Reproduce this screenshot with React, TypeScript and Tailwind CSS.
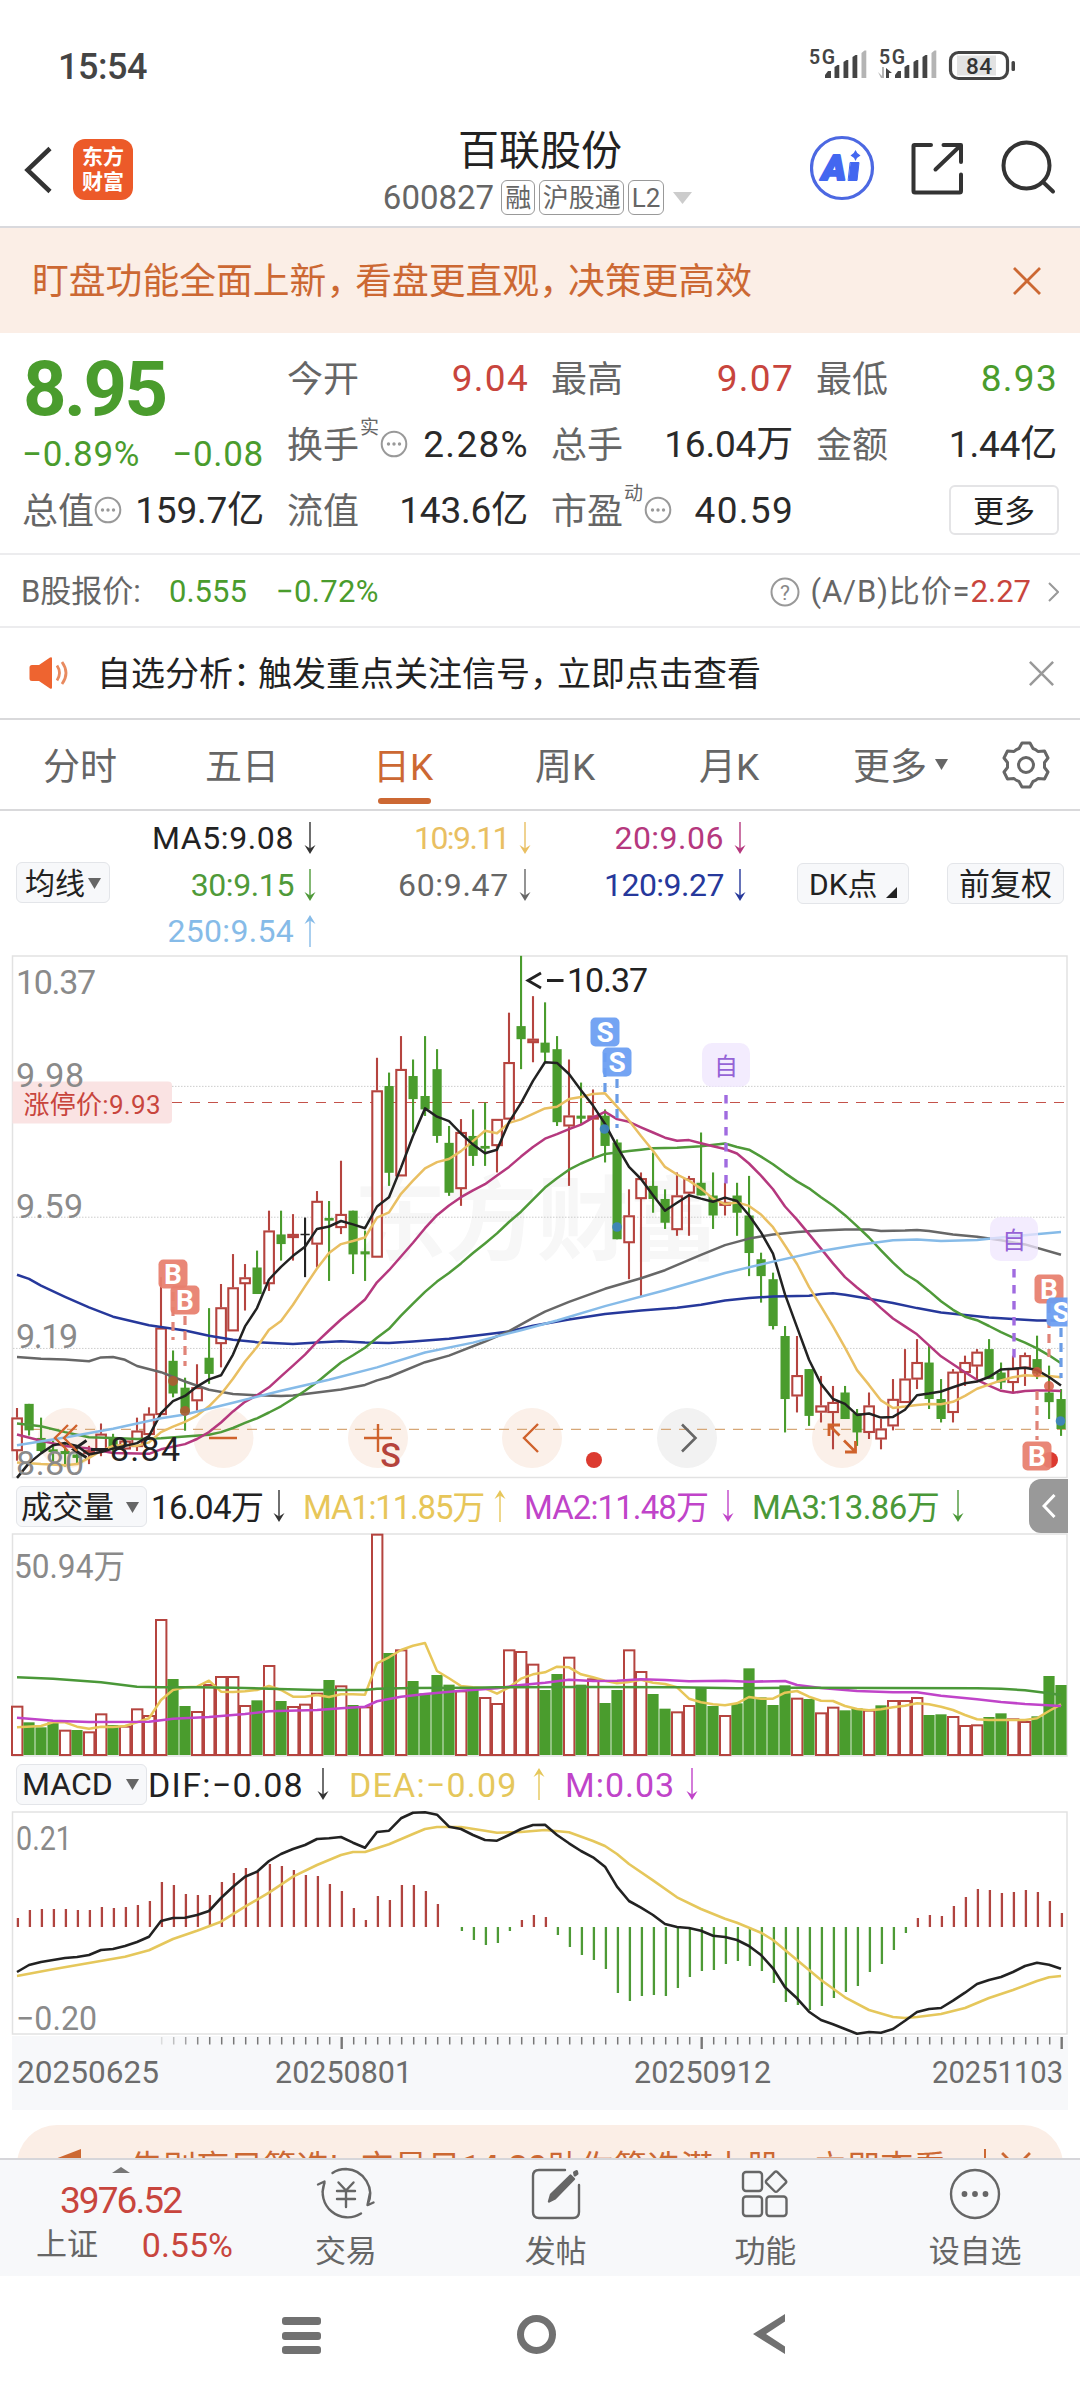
import React from "react";

const RED = "#b5443f";
const GREEN = "#4a9c2d";

type Pts = number[];

// kind, high, body top, body bottom, low — in chart units measured down from the plot origin
const candles: [string, number, number, number, number][] = [
  ["r", 1330, 1358, 1455, 1483], ["g", 1318, 1318, 1395, 1410], ["g", 1358, 1417, 1455, 1458], ["g", 1425, 1450, 1458, 1490],
  ["g", 1430, 1455, 1464, 1500], ["g", 1440, 1465, 1475, 1490], ["r", 1440, 1453, 1461, 1493], ["r", 1375, 1405, 1455, 1470],
  ["g", 1405, 1420, 1450, 1465], ["r", 1420, 1425, 1450, 1465], ["r", 1358, 1396, 1443, 1455], ["r", 1328, 1347, 1408, 1420],
  ["r", 950, 1097, 1350, 1350], ["g", 1163, 1193, 1288, 1299], ["g", 1242, 1271, 1345, 1396], ["r", 1203, 1270, 1310, 1338],
  ["g", 1040, 1184, 1231, 1260], ["r", 970, 1038, 1144, 1212], ["r", 883, 980, 1107, 1107], ["r", 912, 951, 970, 1047],
  ["g", 873, 922, 999, 999], ["r", 757, 815, 970, 990], ["g", 757, 826, 854, 902], ["r", 767, 825, 836, 902],
  ["k", 777, 824, 828, 950], ["r", 700, 729, 855, 922], ["g", 729, 778, 786, 961], ["r", 612, 767, 807, 825],
  ["g", 757, 757, 884, 941], ["g", 815, 875, 884, 961], ["r", 313, 408, 893, 893], ["g", 356, 395, 647, 685],
  ["r", 250, 346, 657, 657], ["g", 318, 366, 433, 530], ["g", 250, 424, 463, 482], ["g", 288, 346, 540, 560],
  ["g", 511, 560, 705, 714], ["r", 491, 529, 694, 743], ["g", 463, 540, 598, 627], ["g", 443, 569, 577, 627],
  ["r", 491, 491, 569, 646], ["r", 182, 326, 492, 492], ["g", 17, 221, 259, 346], ["r", 134, 258, 270, 326],
  ["g", 152, 269, 298, 325], ["g", 250, 288, 500, 511], ["r", 318, 481, 512, 685], ["g", 385, 481, 490, 505],
  ["r", 405, 481, 492, 603], ["g", 463, 481, 569, 617], ["g", 550, 559, 840, 840], ["r", 695, 771, 851, 956],
  ["r", 646, 663, 723, 1005], ["g", 588, 685, 723, 763], ["g", 695, 723, 792, 810], ["r", 646, 713, 813, 830],
  ["r", 656, 663, 707, 830], ["g", 530, 676, 713, 713], ["g", 646, 713, 771, 810], ["r", 676, 732, 740, 771],
  ["g", 676, 713, 763, 830], ["g", 656, 771, 880, 947], ["g", 879, 898, 947, 1024], ["g", 937, 956, 1092, 1102],
  ["g", 1092, 1121, 1304, 1401], ["r", 1121, 1235, 1296, 1343], ["g", 1217, 1217, 1353, 1382], ["r", 1237, 1323, 1343, 1372],
  ["r", 1266, 1313, 1344, 1450], ["g", 1266, 1285, 1362, 1362], ["g", 1333, 1345, 1401, 1440], ["r", 1285, 1323, 1402, 1420],
  ["r", 1362, 1390, 1421, 1450], ["r", 1246, 1304, 1383, 1395], ["r", 1159, 1245, 1315, 1315], ["r", 1130, 1197, 1247, 1275],
  ["g", 1150, 1198, 1304, 1333], ["g", 1246, 1304, 1362, 1372], ["r", 1217, 1225, 1344, 1372], ["r", 1178, 1197, 1228, 1266],
  ["r", 1159, 1167, 1209, 1246], ["g", 1130, 1159, 1246, 1246], ["g", 1198, 1227, 1256, 1275], ["r", 1178, 1215, 1257, 1285],
  ["r", 1169, 1177, 1215, 1266], ["g", 1120, 1188, 1230, 1246], ["g", 1207, 1285, 1313, 1362], ["g", 1275, 1304, 1391, 1411],
];

// moving averages: index, value pairs
const ma5: Pts = [0,1533,1,1490,2,1462,3,1438,4,1432,5,1440,6,1465,7,1458,8,1448,9,1440,10,1432,11,1412,12,1345,13,1310,14,1295,15,1268,16,1247,17,1235,18,1175,19,1093,20,1040,21,957,22,920,23,888,24,862,25,810,26,803,27,787,28,797,29,808,30,745,31,718,32,632,33,540,34,460,35,484,36,497,37,533,38,565,39,590,40,580,41,500,42,445,43,380,44,326,45,328,46,360,47,407,48,452,49,505,50,570,51,630,52,665,53,712,54,757,55,734,56,712,57,722,58,731,59,719,60,729,61,770,62,820,63,882,64,1000,65,1095,66,1190,67,1260,68,1304,69,1318,70,1350,71,1346,72,1358,73,1356,74,1335,75,1293,76,1288,77,1282,78,1270,79,1258,80,1253,81,1240,82,1218,83,1216,84,1213,85,1220,86,1240,87,1265];
const ma10: Pts = [0,1488,2,1493,4,1496,5,1493,6,1475,7,1455,8,1440,9,1437,10,1440,11,1430,12,1400,13,1384,14,1370,15,1352,16,1325,17,1290,18,1245,19,1195,20,1153,21,1103,22,1077,23,1030,24,977,25,925,26,880,27,854,28,845,29,835,30,777,31,762,32,708,33,670,34,634,35,616,36,607,37,584,38,555,39,525,40,532,41,502,42,492,43,476,44,460,45,455,46,433,47,427,48,418,49,416,50,455,51,495,52,540,53,583,54,630,55,652,56,670,57,693,58,722,59,738,60,733,61,743,62,768,63,805,64,858,65,912,66,978,67,1035,68,1093,69,1155,70,1220,71,1263,72,1308,73,1330,74,1326,75,1321,76,1318,77,1319,78,1312,79,1295,80,1274,81,1262,82,1250,83,1241,84,1235,85,1237,86,1237,87,1241];
const ma20: Pts = [0,1407,2,1425,4,1440,6,1448,8,1461,11,1463,12,1450,13,1442,14,1435,15,1420,16,1400,17,1372,18,1340,19,1312,20,1293,21,1270,22,1238,23,1207,24,1175,25,1138,26,1105,27,1073,28,1045,29,1015,30,965,31,930,32,890,33,850,34,808,35,770,36,742,37,718,38,698,39,680,40,655,41,630,42,600,43,572,44,548,45,535,46,520,47,507,48,487,49,470,50,491,51,499,52,515,53,530,54,545,55,554,56,552,57,561,58,570,59,578,60,591,61,620,62,655,63,695,64,745,65,783,66,825,67,867,68,910,69,950,70,980,71,1008,72,1040,73,1070,74,1093,75,1116,76,1148,77,1180,78,1203,79,1226,80,1248,81,1265,82,1280,83,1286,84,1281,85,1279,86,1279,87,1281];
const ma30: Pts = [0,1375,2,1383,4,1400,6,1415,8,1417,10,1420,12,1418,14,1413,16,1408,17,1400,18,1388,19,1373,20,1360,21,1343,22,1325,23,1303,24,1280,25,1255,26,1226,27,1198,28,1177,29,1155,30,1126,31,1100,32,1062,33,1027,34,993,35,963,36,938,37,910,38,880,39,852,40,823,41,790,42,760,43,725,44,690,45,663,46,638,47,620,48,605,49,592,50,588,51,584,52,580,53,576,55,574,57,570,59,562,60,572,61,580,62,600,63,622,64,648,65,672,66,692,67,718,68,742,69,770,70,802,71,835,72,872,73,908,74,940,75,962,76,990,77,1020,78,1045,79,1065,80,1075,81,1092,82,1110,83,1126,84,1140,85,1157,86,1177,87,1200];
const ma60: Pts = [0,1182,2,1187,4,1189,6,1194,7,1183,8,1182,9,1190,10,1208,12,1226,14,1253,16,1277,18,1289,20,1293,22,1295,23,1294,25,1285,27,1276,29,1263,30,1250,31,1240,34,1197,36,1178,39,1137,41,1107,43,1068,44,1050,46,1022,49,984,52,953,54,930,57,885,59,857,61,838,63,826,65,819,67,815,69,812,71,812,72,816,74,815,75,813,76,816,78,826,80,833,82,843,84,855,87,885];
const ma120: Pts = [0,943,1,955,2,975,4,1007,6,1038,8,1065,11,1090,14,1105,16,1120,18,1132,20,1139,23,1144,25,1140,27,1136,29,1140,31,1141,33,1137,36,1129,39,1117,41,1108,43,1091,46,1073,49,1057,52,1047,55,1039,57,1030,59,1018,61,1011,63,1006,66,1004,67,999,68,997,69,1001,71,1013,73,1025,75,1040,77,1053,79,1060,81,1067,83,1072,85,1076,87,1076];
const ma250: Pts = [0,1438,4,1416,8,1390,12,1360,14,1349,18,1315,22,1280,26,1248,30,1212,34,1169,38,1140,42,1104,45,1076,49,1034,54,988,59,938,63,905,67,874,70,857,73,843,75,841,77,845,80,842,83,831,87,819];

const volumes =
  "710r 760g 775g 760g 782r 783g 787r 733r 768g 770r 718r 738r 450r 630g 711g 726r 645r 621r 621r 708r 694g 588r 696g 711r 704r 671r 633g 649r 708g 712r 194r 552g 541r 636g 673g 618g 647g 664r 663g 684r 702r 541r 546r 584r 663g 615g 563r 647g 628r 702g 663g 541r 606r 675g 719g 727r 708r 655g 711g 738r 703g 598g 685g 708g 649g 686r 690g 730r 713r 724g 718g 722r 709g 693r 693r 684r 738g 736g 741r 768r 766r 744g 733g 748r 756r 742g 621g 648g".split(" ");
const vma1: Pts = [0,772,2,768,3,757,4,757,5,770,6,776,7,770,8,771,9,768,10,757,11,745,12,690,13,660,14,652,15,650,16,632,17,665,18,666,19,664,20,660,21,648,22,660,23,680,24,680,25,675,26,681,27,673,28,673,29,674,30,580,31,562,32,540,33,527,34,519,35,603,36,625,37,648,38,652,39,655,40,671,41,652,42,626,43,613,44,607,45,590,46,592,47,613,48,622,49,632,50,640,51,636,52,629,53,638,54,642,55,652,56,686,57,697,58,703,59,706,60,700,61,681,62,686,63,686,64,668,65,663,66,680,67,692,68,693,69,708,70,717,71,721,72,718,73,712,74,707,75,700,76,703,77,710,78,720,79,735,80,748,81,750,82,750,83,750,84,750,85,745,86,723,87,703];
const vma2: Pts = [0,743,3,752,6,756,11,755,13,746,16,741,19,732,21,724,25,720,27,715,29,710,30,694,32,680,34,672,37,662,40,655,42,645,44,638,46,629,48,633,50,632,52,628,54,630,56,634,59,632,61,635,64,633,65,645,67,654,70,663,73,667,75,667,77,677,80,688,82,696,84,702,87,708];
const vma3: Pts = [0,622,3,626,7,637,10,650,12,652,15,652,18,653,21,656,25,660,29,660,30,656,33,654,38,653,40,652,47,651,55,652,60,655,65,653,72,654,80,655,82,656,84,661,86,670,87,675];

const hist = [474,450,447,447,447,450,450,441,444,441,435,423,366,375,402,405,405,366,339,324,335,312,318,330,345,348,372,393,444,480,408,420,375,375,393,432,501,513,540,555,549,513,480,465,471,525,561,585,600,627,699,723,708,705,708,684,651,633,630,612,603,618,633,669,726,735,750,738,714,696,678,636,612,570,519,474,465,468,438,411,387,390,399,396,390,396,423,459];
const dif: Pts = [0,636,1,615,2,606,3,600,4,594,5,591,6,585,7,570,8,567,9,558,10,546,11,530,12,483,13,474,14,473,15,465,16,453,17,414,18,380,19,350,20,335,21,303,22,282,23,267,24,255,25,237,26,235,27,231,28,248,29,263,30,216,31,212,32,175,33,158,34,157,35,164,36,200,37,207,38,225,39,240,40,242,41,225,42,207,43,195,44,194,45,225,46,250,47,273,48,292,49,320,50,380,51,423,52,443,53,465,54,492,55,501,56,504,57,512,58,527,59,531,60,540,61,558,62,585,63,625,64,682,65,715,66,755,67,780,68,793,69,807,70,821,71,816,72,818,73,807,74,782,75,756,76,747,77,744,78,722,79,698,80,672,81,660,82,651,83,636,84,618,85,608,86,614,87,626];
const dea: Pts = [0,648,3,628,6,609,9,590,11,571,13,537,15,512,17,485,19,440,21,398,23,350,25,315,27,285,28,276,29,276,31,253,33,222,34,207,35,201,37,201,39,212,40,218,42,216,44,210,46,217,48,243,49,258,50,282,51,312,53,361,55,412,57,447,59,476,60,488,62,518,63,540,65,600,67,660,69,712,71,750,73,771,74,774,75,771,77,762,79,744,81,714,83,690,85,663,86,652,87,648];

const X = (i: number) => 17 + 12 * i;
const K = (v: number) => 950 + v / 2.904;
const V = (v: number) => 1470 + v / 3;
const M = (v: number) => 1760 + v / 3;

function Line({ d, y, c, w = 2.5 }: { d: Pts; y: (v: number) => number; c: string; w?: number }) {
  const pts: string[] = [];
  for (let i = 0; i < d.length; i += 2) pts.push(`${X(d[i])},${y(d[i + 1]).toFixed(1)}`);
  return <polyline points={pts.join(" ")} fill="none" stroke={c} strokeWidth={w} strokeLinejoin="round" />;
}

function Badge({ x, y, c, t }: { x: number; y: number; c: string; t: string }) {
  return (
    <g>
      <rect x={x - 14.5} y={y - 14.5} width="29" height="29" rx="5" fill={c} opacity="0.94" />
      <text x={x} y={y + 10} fontSize="28" fontWeight="700" fill="#fff" textAnchor="middle">{t}</text>
    </g>
  );
}

function Zi({ x, y }: { x: number; y: number }) {
  return (
    <g>
      <rect x={x - 24} y={y - 22} width="48" height="44" rx="10" fill="#efe5fd" opacity="0.75" />
      <text x={x} y={y + 10} fontSize="24" fill="#9563d6" textAnchor="middle">自</text>
      <line x1={x} x2={x} y1={y + 30} y2={y + 119} stroke="#a06be0" strokeWidth="3.4" strokeDasharray="8.5 7.5" />
    </g>
  );
}

function Dash({ x, a, b, c }: { x: number; a: number; b: number; c: string }) {
  return <line x1={x} x2={x} y1={a} y2={b} stroke={c} strokeWidth="3.2" strokeDasharray="9 6" />;
}

function KChart() {
  return (
    <svg className="block h-[524px] w-full" viewBox="0 955 1080 524">
      <text x="354" y="1253" fontSize="92" fontWeight="700" fill="#f7f7f7" textLength="366">东方财富</text>
      <rect x="12.5" y="956" width="1054.5" height="521.5" fill="none" stroke="#e2e2e2" strokeWidth="1.5" />
      {[396, 776, 1157].map((v) => (
        <line key={v} x1="13" x2="1066" y1={K(v)} y2={K(v)} stroke="#cccccc" strokeWidth="1" strokeDasharray="1.5 1.5" />
      ))}
      {[68, 223.5, 378, 532, 842].map((x) => (
        <circle key={x} cx={x} cy="1438" r="30" fill="#fbf0e9" />
      ))}
      <circle cx="687" cy="1438" r="30" fill="#f2f2f2" />
      <line x1="13" x2="1066" y1="1429.4" y2="1429.4" stroke="#d6a777" strokeWidth="1.3" strokeDasharray="10 8" />
      <line x1="172" x2="1066" y1="1102.5" y2="1102.5" stroke="#c4524a" strokeWidth="1.2" strokeDasharray="10 8" />
      <path d="M12.5 1081.5H168a4 4 0 0 1 4 4V1119.500a4 4 0 0 1-4 4H12.500z" fill="#fae3e3" />
      <g fontSize="34" fill="#8a8a8a">
        <text x="16" y="994" textLength="80">10.37</text>
        <text x="16" y="1086.5" textLength="68">9.98</text>
        <text x="16" y="1217.5" textLength="67">9.59</text>
        <text x="16" y="1348" textLength="62">9.19</text>
      </g>
      <text x="23.500" y="1114" fontSize="26" fill="#c8453d" textLength="137">涨停价:9.93</text>
      {candles.map(([k, h, t, b, l], i) => {
        const x = X(i);
        const c = k === "r" ? RED : k === "g" ? GREEN : "#222";
        const yt = K(t), yb = K(b);
        return k === "r" ? (
          <g key={i} stroke={c} strokeWidth="2.1">
            <line x1={x} x2={x} y1={K(h)} y2={yt} />
            <line x1={x} x2={x} y1={yb} y2={K(l)} />
            <rect x={x - 4.7} y={yt + 0.8} width="9.600" height={Math.max(yb - yt - 1.6, 2)} fill={yb - yt > 5 ? "#fff" : "#e07a72"} />
          </g>
        ) : (
          <g key={i} fill={c}>
            <rect x={x - 1} y={K(h)} width="2.1" height={K(l) - K(h)} />
            <rect x={x - 4.5} y={yt} width="9.2" height={Math.max(yb - yt, 1.5)} />
          </g>
        );
      })}
      <g>
        <Line d={ma120} y={K} c="#26389b" />
        <Line d={ma60} y={K} c="#676767" />
        <Line d={ma30} y={K} c="#4f9a39" />
        <Line d={ma20} y={K} c="#b5387e" />
        <Line d={ma10} y={K} c="#e9bf62" />
        <Line d={ma5} y={K} c="#222222" />
        <Line d={ma250} y={K} c="#86bbe8" />
      </g>
      <text x="16" y="1475" fontSize="34" fill="#8a8a8a" textLength="68">8.80</text>
      <Dash x={173} a={1292} b={1340} c="#e08478" />
      <Dash x={185} a={1316} b={1366} c="#e08478" />
      <Dash x={605} a={1053} b={1098} c="#6a9ce6" />
      <Dash x={617} a={1079} b={1128} c="#6a9ce6" />
      <Dash x={1049} a={1304} b={1357} c="#e08478" />
      <Dash x={1037} a={1391} b={1440} c="#e08478" />
      <Dash x={1061} a={1328} b={1378} c="#6a9ce6" />
      <g fill="#ad5c33" opacity="0.9">
        <circle cx="173" cy="1381" r="5" />
        <circle cx="185" cy="1411" r="5" />
      </g>
      <g fill="#3e84bd" opacity="0.95">
        <circle cx="604.500" cy="1129" r="4.8" />
        <circle cx="617" cy="1227" r="4.8" />
        <circle cx="1060.500" cy="1421" r="4.8" />
      </g>
      <g fill="#d8553f" opacity="0.8">
        <circle cx="1037" cy="1372" r="5" />
        <circle cx="1049" cy="1386" r="5" />
      </g>
      <Badge x={173} y={1274} c="#e8806f" t="B" />
      <Badge x={185} y={1300} c="#e8806f" t="B" />
      <Badge x={605} y={1032} c="#6b9ef2" t="S" />
      <Badge x={617} y={1062} c="#6b9ef2" t="S" />
      <Badge x={1049} y={1289} c="#e8806f" t="B" />
      <svg x="0" y="955" width="1067.5" height="524" viewBox="0 955 1067.5 524">
        <Badge x={1061} y={1312} c="#6b9ef2" t="S" />
      </svg>
      <circle cx="594" cy="1460" r="8" fill="#dc3a30" />
      <circle cx="1050" cy="1460" r="8" fill="#dc3a30" />
      <Badge x={1037} y={1456} c="#e8806f" t="B" />
      <Zi x={726} y={1065} />
      <Zi x={1014} y={1239} />
      <g fill="none" stroke="#222" strokeWidth="2.8">
        <path d="M541 973l-13 7.500 13 7.500M547 980.500h16.500" />
        <path d="M86.500 1440.500l-13 9 13 8M91 1449.500h17" />
      </g>
      <text x="567" y="992" fontSize="34" fill="#222" textLength="81">10.37</text>
      <text x="110" y="1461" fontSize="34" fill="#222" textLength="70">8.84</text>
      <g fill="none" stroke="#cf622c" strokeWidth="2.4">
        <path d="M68 1425l-13 13 13 13M77 1425l-13 13 13 13" />
        <path d="M209 1438h28M364 1438h28M378 1424v28M538 1424l-14 14 14 14" />
        <path d="M829 1436v-11h11M829 1425l10.500 10.500M845 1452h10.500v-11M844 1440.500l11.500 11.500" strokeWidth="2.8" />
      </g>
      <path d="M682 1424.500l13.500 13.500-13.500 13.500" fill="none" stroke="#666" strokeWidth="2.6" />
      <text x="390.500" y="1467" fontSize="34" fontWeight="500" fill="#b5433c" textAnchor="middle">S</text>
    </svg>
  );
}

function VolumeChart() {
  return (
    <svg className="block h-[224px] w-full" viewBox="0 1533 1080 224">
      <rect x="12.5" y="1534" width="1054.5" height="222" fill="none" stroke="#e2e2e2" strokeWidth="1.5" />
      <text x="14" y="1577.500" fontSize="33" fill="#8a8a8a" textLength="111" lengthAdjust="spacingAndGlyphs">50.94万</text>
      {volumes.map((s, i) => {
        const y = V(parseInt(s, 10));
        return s.endsWith("r") ? (
          <rect key={i} x={X(i) - 5} y={y} width="10.400" height={1755 - y} fill="#fff" stroke={RED} strokeWidth="2" />
        ) : (
          <rect key={i} x={X(i) - 5.6} y={y - 1} width="11.2" height={1756 - y} fill={GREEN} />
        );
      })}
      <Line d={vma1} y={V} c="#e7c659" />
      <Line d={vma2} y={V} c="#c044c9" w={2.6} />
      <Line d={vma3} y={V} c="#4a9838" />
    </svg>
  );
}

function MacdChart() {
  return (
    <svg className="block h-[299px] w-full" viewBox="0 1811 1080 299">
      <rect x="12" y="2036" width="1056" height="74" fill="#f7f8fa" />
      <rect x="12.5" y="1812" width="1054.5" height="222" fill="none" stroke="#e2e2e2" strokeWidth="1.5" />
      {hist.map((v, i) =>
        v === 501 ? null : (
          <line key={i} x1={X(i) + 0.9} x2={X(i) + 0.9} y1={M(501)} y2={M(v)} stroke={v < 501 ? "#b0443f" : "#4d9a36"} strokeWidth="2.3" />
        ),
      )}
      <Line d={dea} y={M} c="#e5c75b" w={2.6} />
      <Line d={dif} y={M} c="#222" w={2.6} />
      <text x="16" y="1850" fontSize="33" fill="#8a8a8a" textLength="56" lengthAdjust="spacingAndGlyphs">0.21</text>
      <text x="16" y="2029.500" fontSize="33" fill="#8a8a8a" textLength="81" lengthAdjust="spacingAndGlyphs">−0.20</text>
      {hist.map((_, i) =>
        i < 12 ? null : (
          <line key={i} x1={X(i) + 0.7} x2={X(i) + 0.7} y1={2037} y2={i % 30 === 27 ? 2049 : 2044.5} stroke="#777" strokeWidth={i % 30 === 27 ? 2.4 : 1.5} opacity={Math.min(1, (i - 11) * 0.22)} />
        ),
      )}
      <g fontSize="32" fill="#6c6c6c">
        <text x="17" y="2082.500" textLength="142" lengthAdjust="spacingAndGlyphs">20250625</text>
        <text x="275" y="2082.500" textLength="137" lengthAdjust="spacingAndGlyphs">20250801</text>
        <text x="634" y="2082.500" textLength="137" lengthAdjust="spacingAndGlyphs">20250912</text>
        <text x="932" y="2082.500" textLength="131" lengthAdjust="spacingAndGlyphs">20251103</text>
      </g>
    </svg>
  );
}

function Arrow({ c, up = false }: { c: string; up?: boolean }) {
  return (
    <svg className={up ? "h-[34px] w-[14px] shrink-0 rotate-180" : "h-[34px] w-[14px] shrink-0"} viewBox="0 0 14 34" fill="none" stroke={c}>
      <path d="M7 1v28" strokeWidth="1.4" />
      <path d="M1.500 24L7 33l5.500-9L7 27.500z" fill={c} stroke="none" />
    </svg>
  );
}

function Dots() {
  return (
    <svg className="h-[28px] w-[28px] shrink-0" viewBox="0 0 28 28">
      <circle cx="14" cy="14" r="12.300" fill="none" stroke="#999" strokeWidth="2" />
      <g fill="#999">
        <circle cx="8.500" cy="14" r="1.700" />
        <circle cx="14" cy="14" r="1.700" />
        <circle cx="19.500" cy="14" r="1.700" />
      </g>
    </svg>
  );
}

function Tri({ className = "" }: { className?: string }) {
  return (
    <svg className={`h-[11px] w-[13px] shrink-0 ${className}`} viewBox="0 0 13 11">
      <path d="M0 0h13L6.500 11z" fill="#666" />
    </svg>
  );
}

function Cross({ s, c, w = 2.6 }: { s: number; c: string; w?: number }) {
  return (
    <svg width={s} height={s} viewBox="0 0 28 28" fill="none" stroke={c} strokeWidth={w}>
      <path d="M1 1l26 26M27 1L1 27" />
    </svg>
  );
}

function Cell({ label, value, tone = "text-[#2a2a2a]", sup, dots }: { label: string; value: string; tone?: string; sup?: string; dots?: boolean }) {
  const digitsOnly = /^[\d.%]+$/.test(value);
  return (
    <div className="flex h-[66px] items-center justify-between">
      <div className="-ml-[2px] flex items-center">
        <span className="pt-[3px] text-[36px] text-[#666]">{label}</span>
        {sup && <span className="-mt-[34px] ml-px w-[20px] text-[19px] text-[#666]">{sup}</span>}
        {dots && <Dots />}
      </div>
      <span className={`text-[37px] ${digitsOnly ? "-mr-px tracking-[1.3px]" : "tracking-[-0.2px]"} ${tone}`}>{value}</span>
    </div>
  );
}

function Signal({ x, extra }: { x: number; extra?: boolean }) {
  return (
    <g transform={`translate(${x} 0)`}>
      <text x="-1" y="16.500" fontSize="19.500" fontWeight="600" fill="#444" textLength="26">5G</text>
      <g fill="#444">
        <path d="M15 31v-3l3-4h3v7z" />
        <path d="M24.500 31V20l3-2h1.800v13zM33.500 31V15l3-2h1.800v18zM42.500 31V10l3-2h1.800v23z" />
      </g>
      <path d="M51.500 31V6l3-2.500h1.800V31z" fill="#b4b4b4" />
      {extra && (
        <g>
          <path d="M-2 25l4 4v-9h2v11H1z" fill="#b4b4b4" />
          <path d="M6 31V21l6 5h-3v5z" fill="#444" />
        </g>
      )}
    </g>
  );
}

function Legend({ t, c, up, color }: { t: string; c: string; up?: boolean; color: string }) {
  return (
    <div className={`flex h-[46.500px] items-center justify-end gap-[9px] text-[32px] ${c}`}>
      <span>{t}</span>
      <Arrow c={color} up={up} />
    </div>
  );
}

function NavItem({ label, children }: { label: string; children: React.ReactNode }) {
  return (
    <div className="flex flex-1 flex-col items-center pt-[6px]">
      <svg className="h-[56px] w-[60px]" viewBox="-30 -28 60 56" fill="none" stroke="#666" strokeWidth="2.400" strokeLinecap="round" strokeLinejoin="round">
        {children}
      </svg>
      <span className="mt-[10px] text-[31px] leading-[40px] text-[#666]">{label}</span>
    </div>
  );
}

const pill = "flex h-[41px] items-center rounded-[6px] border border-[#e3e5e9] bg-[#f7f8fa] text-[#222]";

export default function App() {
  return (
    <div lang="zh-CN" className="flex h-[2400px] w-[1080px] flex-col overflow-hidden bg-white leading-none whitespace-nowrap [font-family:Roboto,'Noto_Sans_CJK_SC',sans-serif]">
      {/* status bar */}
      <div className="flex h-[130px] shrink-0 items-start justify-between pl-[58px] pr-[52px] pt-[47px]">
        <span className="text-[36px] leading-[40px] font-medium tracking-[-0.500px] text-[#444]">15:54</span>
        <svg className="h-[40px] w-[220px]" viewBox="0 0 220 40">
          <Signal x={2} />
          <Signal x={72} extra />
          <rect x="142.500" y="5.500" width="57" height="26" rx="8" fill="#fff" stroke="#444" strokeWidth="3.200" />
          <path d="M149 8.500h39v20h-39z" fill="#e2e2e2" />
          <rect x="203.500" y="14" width="3.500" height="10" rx="1.500" fill="#444" />
          <text x="158" y="26.500" fontSize="22.500" fontWeight="500" fill="#333" textLength="26">84</text>
        </svg>
      </div>

      {/* title bar */}
      <header className="flex h-[98px] shrink-0 items-center border-b-2 border-[#d9d9dd]">
        <svg className="-mt-[17px] ml-[20px] h-[50px] w-[34px]" viewBox="0 0 34 50" fill="none" stroke="#333" strokeWidth="4.500">
          <path d="M30 3.500L7.500 25 30 46.500" />
        </svg>
        <div className="-mt-[17px] ml-[19px] flex h-[61px] w-[60px] flex-col items-center justify-center rounded-[12px] bg-[#ec5a29] text-[21px] leading-[25px] font-bold text-white">
          <span>东方</span>
          <span>财富</span>
        </div>
        <div className="flex w-[677px] flex-col items-center pl-[137px]">
          <span className="-mt-[13px] text-[41px] leading-[48px] text-[#222]">百联股份</span>
          <div className="mt-[4px] flex h-[38px] items-center pr-[5px] text-[#666]">
            <span className="mr-[7px] text-[33px]">600827</span>
            <span className="mr-[4px] flex h-[35px] w-[34px] items-center justify-center rounded-[6px] border-[1.500px] border-[#999] text-[26px]">融</span>
            <span className="mr-[4px] flex h-[35px] w-[85px] items-center justify-center rounded-[6px] border-[1.500px] border-[#999] text-[26px]">沪股通</span>
            <span className="flex h-[35px] w-[36px] items-center justify-center rounded-[6px] border-[1.500px] border-[#999] text-[26px]">L2</span>
            <svg className="ml-[9px] h-[12px] w-[19px]" viewBox="0 0 19 12"><path d="M0 0h19L9.500 12z" fill="#ccc" /></svg>
          </div>
        </div>
        <svg className="mt-[-10px] h-[70px] w-[270px] translate-y-[-4px]" viewBox="810 135 270 70" fill="none" stroke="#333" strokeWidth="4" strokeLinecap="round" strokeLinejoin="round">
          <circle cx="842" cy="169" r="30.500" stroke="#4c68e2" strokeWidth="3.200" />
          <text x="822" y="180.500" fontSize="35" fontWeight="900" fontStyle="italic" fill="#4367f0" stroke="#4367f0" strokeWidth="2.200" textLength="24" lengthAdjust="spacingAndGlyphs">A</text>
          <path d="M850.500 163.500h8.500l-2 18h-8.500z" fill="#4367f0" stroke="#4367f0" strokeWidth="1" />
          <path d="M855.500 151q1.500 4 5 5.500-3.500 1.500-5 5.500-1.500-4-5-5.500 3.500-1.500 5-5.500z" fill="#4367f0" stroke="none" />
          <path d="M931 146h-16.500q-1 0-1 1v45q0 1.500 1.500 1.500h44.500q1.500 0 1.500-1.500v-16.500M943.500 146H961v17M960 147l-24.500 23.500" />
          <circle cx="1026.500" cy="166.500" r="23" />
          <path d="M1043 183l10 9.500" />
        </svg>
      </header>

      {/* promotion strip */}
      <div className="flex h-[105px] shrink-0 items-center justify-between bg-[#fbeee6] pl-[32px] pr-[39px] text-[36.800px] text-[#cc6833]">
        <span className="pt-[3px]">盯盘功能全面上新<span className="tracking-[-8px]">，</span>看盘更直观<span className="tracking-[-8px]">，</span>决策更高效</span>
        <Cross s={28} c="#cc6833" w={2.800} />
      </div>

      {/* quote summary */}
      <section className="grid h-[222px] shrink-0 grid-cols-[240px_239px_240px_239px] gap-x-[25px] border-b-2 border-[#ececee] pl-[24px] pt-[12px]">
        <div>
          <div className="-ml-px flex h-[86px] items-center pt-[2px] text-[76px] font-bold tracking-[-2.600px] text-[#4a9c2d]">8.95</div>
          <div className="-ml-[2px] flex h-[46px] items-center justify-between text-[35px] tracking-[0.700px] text-[#4a9c2d]">
            <span>−0.89%</span>
            <span>−0.08</span>
          </div>
          <Cell label="总值" value="159.7亿" dots />
        </div>
        <div>
          <Cell label="今开" value="9.04" tone="text-[#c8453d]" />
          <Cell label="换手" value="2.28%" sup="实" dots />
          <Cell label="流值" value="143.6亿" />
        </div>
        <div>
          <Cell label="最高" value="9.07" tone="text-[#c8453d]" />
          <Cell label="总手" value="16.04万" />
          <Cell label="市盈" value="40.59" sup="动" dots />
        </div>
        <div>
          <Cell label="最低" value="8.93" tone="text-[#4a9c2d]" />
          <Cell label="金额" value="1.44亿" />
          <div className="flex h-[66px] items-center justify-end">
            <button className="-mr-[2px] h-[50px] w-[110px] rounded-[6px] border-2 border-[#e4e4e6] pt-[2px] text-[31px] text-[#222]">更多</button>
          </div>
        </div>
      </section>

      {/* B share row */}
      <div className="flex h-[73px] shrink-0 items-center border-b-2 border-[#ececee] pl-[21px] pr-[21px] pt-[2px] text-[31px] text-[#666]">
        <span className="w-[148px]">B股报价:</span>
        <span className="w-[107px] text-[#4a9c2d]">0.555</span>
        <span className="flex-1 tracking-[0.300px] text-[#4a9c2d]">−0.72%</span>
        <svg className="mr-[11px] h-[30px] w-[30px]" viewBox="0 0 30 30">
          <circle cx="15" cy="15" r="13.500" fill="none" stroke="#999" strokeWidth="2" />
          <text x="15" y="22.500" fontSize="21" fill="#888" textAnchor="middle">?</text>
        </svg>
        <span className="tracking-[0.900px]">(A/B)比价=</span>
        <span className="text-[#c8453d]">2.27</span>
        <svg className="ml-[17px] h-[20px] w-[11px]" viewBox="0 0 11 20" fill="none" stroke="#999" strokeWidth="2"><path d="M1 1l9 9-9 9" /></svg>
      </div>

      {/* signal notice */}
      <div className="flex h-[92px] shrink-0 items-center border-b-2 border-[#d9d9db] pr-[26px]">
        <svg className="ml-[29px] h-[34px] w-[40px]" viewBox="0 0 40 34">
          <path d="M3 9h7L21 1.500q2-1 2 1v29q0 2-2 1L10 25H3q-2.500 0-2.500-2.500v-11Q.5 9 3 9z" fill="#ee6430" />
          <path d="M28 9.500q5 7.500 0 15M33 6q8 11 0 22" fill="none" stroke="#e88a5f" strokeWidth="2.800" />
        </svg>
        <span className="ml-[28px] flex-1 pt-[2px] text-[34px] text-[#222]">自选分析<span className="tracking-[-9px]">：</span>触发重点关注信号<span className="tracking-[-7px]">，</span>立即点击查看</span>
        <Cross s={25} c="#999" w={2.800} />
      </div>

      {/* period tabs */}
      <nav className="flex h-[91px] shrink-0 items-center border-b-2 border-[#d9d9db] pl-[43px] text-[37px] text-[#666]">
        <span className="w-[162px] pt-[5px]">分时</span>
        <span className="w-[168px] pt-[5px]">五日</span>
        <span className="relative w-[162px] pt-[5px] text-[#cc6833]">
          日K
          <i className="absolute top-[54px] left-[5px] h-[6px] w-[53px] rounded-[3px] bg-[#cc6833]" />
        </span>
        <span className="w-[164px] pt-[5px]">周K</span>
        <span className="w-[154px] pt-[5px]">月K</span>
        <span className="pt-[5px]">更多</span>
        <Tri className="mr-[53px] ml-[8px]" />
        <svg className="h-[50px] w-[50px]" viewBox="-25 -25 50 50" fill="none" stroke="#666" strokeWidth="3" strokeLinejoin="round">
          <path d="M-4-22H4L7-16.500Q10-15.500 12-13.500L18.500-14 22-7 18.500-2.500V2.500L22 7 18.500 14 12 13.500Q10 15.500 7 16.500L4 22H-4L-7 16.500Q-10 15.500-12 13.500L-18.500 14-22 7-18.500 2.500V-2.500L-22-7-18.500-14-12-13.500Q-10-15.500-7-16.500Z" />
          <circle r="7.500" />
        </svg>
      </nav>

      {/* moving average legend */}
      <div className="flex h-[144px] shrink-0 items-start">
        <button className={`${pill} mt-[51px] ml-[16px] w-[94px] pl-[8px] pt-[2px] text-[30px]`}>
          均线<Tri className="ml-[3px]" />
        </button>
        <div className="mt-[4px] grid grid-cols-[207px_215px_215px]">
          <Legend t="MA5:9.08" c="tracking-[0.600px] text-[#222]" color="#333" />
          <Legend t="10:9.11" c="tracking-[-1.600px] text-[#e9bf62]" color="#e9bf62" />
          <Legend t="20:9.06" c="tracking-[0.500px] text-[#b5387e]" color="#b5387e" />
          <Legend t="30:9.15" c="tracking-[-0.400px] text-[#4f9a39]" color="#4f9a39" />
          <Legend t="60:9.47" c="tracking-[0.700px] text-[#666]" color="#666" />
          <Legend t="120:9.27" c="tracking-[-0.500px] text-[#26389b]" color="#26389b" />
          <Legend t="250:9.54" c="tracking-[0.300px] text-[#86bbe8]" color="#86bbe8" up />
        </div>
        <button className={`${pill} mt-[52px] ml-[50px] w-[112px] pl-[11px] pt-[2px] text-[30px]`}>
          DK点
          <svg className="mt-[16px] ml-[8px] h-[11px] w-[11px]" viewBox="0 0 11 11"><path d="M11 0v11H0z" fill="#222" /></svg>
        </button>
        <button className={`${pill} mt-[52px] ml-[38px] w-[117px] justify-center pt-[2px] text-[31px]`}>前复权</button>
      </div>

      <div className="shrink-0"><KChart /></div>

      {/* volume header */}
      <div className="flex h-[54px] shrink-0 items-center pl-[16px] pr-[12px] text-[33px]">
        <button className={`${pill} w-[131px] justify-between pl-[4px] pr-[7px] pt-[2px] text-[31px]`}>
          成交量<Tri />
        </button>
        <span className="w-[125px] pl-[4px] pt-[2px] tracking-[-0.600px] text-[#222]">16.04万</span>
        <Arrow c="#333" />
        <span className="w-[207px] pl-[17px] pt-[2px] tracking-[-1.200px] text-[#e7c659]">MA1:11.85万</span>
        <Arrow c="#e7c659" up />
        <span className="w-[214px] pl-[17px] pt-[2px] tracking-[-0.900px] text-[#c044c9]">MA2:11.48万</span>
        <Arrow c="#c044c9" />
        <span className="w-[216px] pl-[17px] pt-[2px] tracking-[-0.600px] text-[#4a9838]">MA3:13.86万</span>
        <Arrow c="#4a9838" />
        <div className="ml-auto flex h-[54px] w-[39px] items-center justify-center rounded-l-[12px] bg-[#999]">
          <svg className="h-[24px] w-[14px]" viewBox="0 0 14 24" fill="none" stroke="#fff" strokeWidth="3"><path d="M12.500 1L2 12l10.500 11" /></svg>
        </div>
      </div>
      <div className="shrink-0"><VolumeChart /></div>

      {/* macd header */}
      <div className="flex h-[54px] shrink-0 items-center pl-[16px] text-[34px]">
        <button className={`${pill} w-[131px] justify-between pl-[5px] pr-[7px] text-[32px]`}>
          MACD<Tri />
        </button>
        <span className="w-[169px] pl-[1px] pt-[2px] tracking-[1.300px] text-[#222]">DIF:−0.08</span>
        <Arrow c="#333" />
        <span className="w-[202px] pl-[19px] pt-[2px] tracking-[1.200px] text-[#e5c75b]">DEA:−0.09</span>
        <Arrow c="#e5c75b" up />
        <span className="w-[139px] pl-[19px] pt-[2px] tracking-[1px] text-[#c044c9]">M:0.03</span>
        <Arrow c="#c044c9" />
      </div>
      <div className="shrink-0"><MacdChart /></div>

      {/* clipped promotion card */}
      <div className="mt-[15px] ml-[17px] h-[33px] w-[1046px] shrink-0 overflow-hidden">
        <div className="flex h-[84px] items-center rounded-[40px] bg-[#fbeee6] text-[33px] text-[#cc6833]">
          <svg className="ml-[36px] h-[36px] w-[50px] shrink-0" viewBox="0 0 50 36"><path d="M28 0v36L2 24V10z" fill="#cc6833" /></svg>
          <span className="ml-[27px] tracking-[0.300px]">告别盲目筛选<span className="tracking-[14px]">!</span> 交易日<b className="font-bold">14:30</b>助你筛选潜力股，立即查看</span>
          <i className="mr-[15px] ml-auto h-[36px] w-[2px] bg-[#cc6833]" />
          <span className="mr-[32px]"><Cross s={30} c="#cc6833" /></span>
        </div>
      </div>

      {/* bottom bar */}
      <footer className="flex h-[118px] shrink-0 border-t-2 border-[#d6d6da] bg-[#f7f8fa]">
        <div className="flex w-[241px] flex-col items-center">
          <svg className="mt-[7px] h-[6px] w-[18px]" viewBox="0 0 18 6"><path d="M0 6L9 0l9 6z" fill="#777" /></svg>
          <span className="mt-[8px] text-[37px] leading-[40px] tracking-[-1.900px] text-[#c8453d]">3976.52</span>
          <div className="mt-[4px] flex w-full items-center justify-between pl-[36px] pr-[8px] leading-[40px]">
            <span className="text-[31px] text-[#666]">上证</span>
            <span className="text-[34px] text-[#c8453d]">0.55%</span>
          </div>
        </div>
        <NavItem label="交易">
          <path d="M-13.500-21Q-8-25 0-25A25 25 0 0 1 21.500 11M22 11L27.500 8.500M21.500 11L24-1M15 19.500A25 25 0 0 1-21.500-11M-28-9.500L-21.500-12.500M-21.500-12L-23.500-2" />
          <path d="M-7.500-11.500L0-3.500 7.500-11.500M0-3.500V13M-9-3H9M-9 5H9" />
        </NavItem>
        <NavItem label="发帖">
          <path d="M9-24H-17Q-23-24-23-18V18Q-23 24-17 24H17Q23 24 23 18V-9" />
          <path d="M-7 7.500L-5 .5 14.500-18.500 18-15-1 4.500Z" fill="#666" />
          <path d="M18.500-21.500L20.500-22.500 21-20.500 19-19Z" strokeWidth="3" />
        </NavItem>
        <NavItem label="功能">
          <rect x="-22" y="-22" width="19" height="19" rx="3" />
          <rect x="-22" y="2.500" width="19" height="19.500" rx="3" />
          <rect x="1.500" y="2.500" width="20" height="19.500" rx="3" />
          <rect x="3.200" y="-20" width="15.500" height="15.500" rx="2" transform="rotate(45 11 -12.200)" />
        </NavItem>
        <NavItem label="设自选">
          <circle r="24" />
          <g fill="#666" stroke="none">
            <circle cx="-10.500" r="2.900" /><circle r="2.900" /><circle cx="10.500" r="2.900" />
          </g>
        </NavItem>
      </footer>

      {/* system navigation */}
      <div className="flex h-[124px] shrink-0 items-start pt-[38px] pl-[282px]">
        <div className="mt-[3px] flex h-[37px] w-[39px] flex-col justify-between">
          <i className="h-[8px] rounded-[3px] bg-[#717171]" />
          <i className="h-[8px] rounded-[3px] bg-[#717171]" />
          <i className="h-[8px] rounded-[3px] bg-[#717171]" />
        </div>
        <div className="mt-px ml-[196px] h-[39px] w-[39px] rounded-full border-[7px] border-[#717171]" />
        <svg className="ml-[197px] h-[40px] w-[32px]" viewBox="0 0 32 40"><path d="M0 20L32 0v7.500L13 20l19 12.500V40z" fill="#717171" /></svg>
      </div>
    </div>
  );
}
